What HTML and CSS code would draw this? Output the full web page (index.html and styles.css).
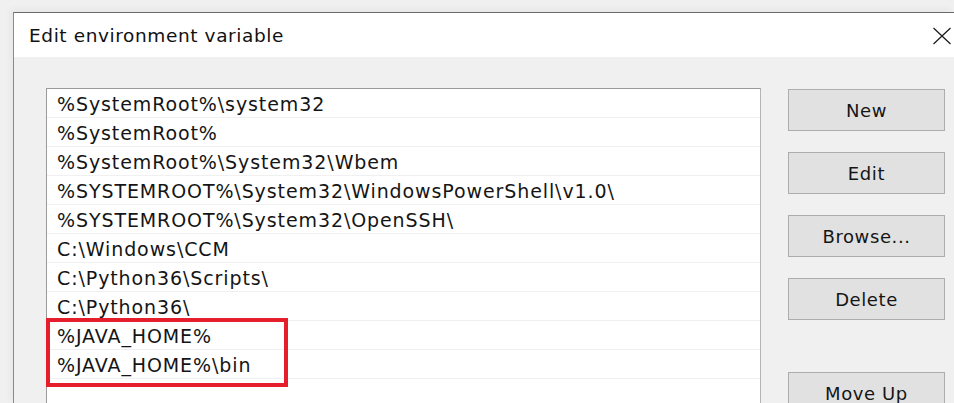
FILE: index.html
```html
<!DOCTYPE html>
<html lang="en">
<head>
<meta charset="utf-8">
<title>Edit environment variable</title>
<link rel="stylesheet" href="styles.css">
</head>
<body>
<div class="dialog">
  <div class="titlebar">
    <span class="title">Edit environment variable</span>
    <svg class="close" width="20" height="18" viewBox="0 0 20 18" aria-hidden="true">
      <path d="M1.5 1 L18.5 17 M18.5 1 L1.5 17" stroke="#1a1a1a" stroke-width="1.2" fill="none"/>
    </svg>
  </div>
  <div class="content">
    <div class="list">
      <div class="row">%SystemRoot%\system32</div>
      <div class="row">%SystemRoot%</div>
      <div class="row">%SystemRoot%\System32\Wbem</div>
      <div class="row">%SYSTEMROOT%\System32\WindowsPowerShell\v1.0\</div>
      <div class="row">%SYSTEMROOT%\System32\OpenSSH\</div>
      <div class="row">C:\Windows\CCM</div>
      <div class="row">C:\Python36\Scripts\</div>
      <div class="row">C:\Python36\</div>
      <div class="row">%JAVA_HOME%</div>
      <div class="row">%JAVA_HOME%\bin</div>
      <div class="row"></div>
      <div class="highlight"></div>
    </div>
    <div class="buttons">
      <button class="btn">New</button>
      <button class="btn">Edit</button>
      <button class="btn">Browse...</button>
      <button class="btn">Delete</button>
      <button class="btn btn-gap">Move Up</button>
    </div>
  </div>
</div>
</body>
</html>
```
FILE: styles.css
```css
html, body {
  margin: 0;
  padding: 0;
  height: 100%;
  overflow: hidden;
}

body {
  background: #f0f0f0;
  font-family: "DejaVu Sans", "Noto Sans", sans-serif;
  color: #1b1b1b;
  padding: 12px 0 0 13px;
  box-sizing: border-box;
}

.dialog {
  border-top: 1px solid #6b6b6b;
  border-left: 1px solid #8a8a8a;
  background: #f0f0f0;
  height: 100%;
  box-shadow: -3px -3px 6px rgba(0, 0, 0, 0.04);
}

.titlebar {
  background: #ffffff;
  height: 44px;
  display: flex;
  align-items: center;
  justify-content: space-between;
  padding: 0 2px 0 15px;
}

.title {
  font-size: 18.5px;
  letter-spacing: 0.6px;
  color: #111;
  padding-top: 1px;
}

.close {
  display: block;
  margin-top: 2px;
}

.content {
  display: flex;
  align-items: flex-start;
  padding: 31px 0 0 32px;
}

.list {
  position: relative;
  width: 713px;
  background: #ffffff;
  border: 1px solid #9a9a9a;
  border-right-color: #b4b4b4;
}

.row {
  height: 28px;
  border-bottom: 1px solid #f0f0f0;
  padding-left: 10px;
  font-size: 19px;
  letter-spacing: 0.9px;
  line-height: 30px;
  white-space: nowrap;
  color: #151515;
}

.highlight {
  position: absolute;
  left: -1px;
  top: 229px;
  width: 242px;
  height: 69px;
  border: 4px solid #e41f2b;
  box-sizing: border-box;
}

.buttons {
  display: flex;
  flex-direction: column;
  gap: 21px;
  margin-left: 27px;
  padding-top: 1px;
}

.btn {
  width: 157px;
  height: 42px;
  background: #e1e1e1;
  border: 1px solid #adadad;
  font-family: inherit;
  font-size: 18px;
  letter-spacing: 0.6px;
  color: #151515;
  padding: 0;
}

.btn-gap {
  margin-top: 31px;
}
```
